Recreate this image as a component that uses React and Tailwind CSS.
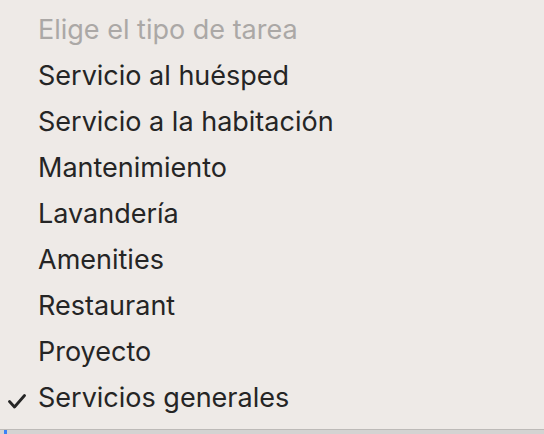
const options = [
  "Servicio al huésped",
  "Servicio a la habitación",
  "Mantenimiento",
  "Lavandería",
  "Amenities",
  "Restaurant",
  "Proyecto",
  "Servicios generales",
];

const selected = "Servicios generales";

const CheckIcon = () => (
  <svg width="20" height="15" viewBox="0 0 20 15" fill="none">
    <path
      d="M2.5 7.5 L7.5 13 L17.5 1.5"
      stroke="#262626"
      strokeWidth="2.8"
      strokeLinecap="round"
      strokeLinejoin="round"
    />
  </svg>
);

const App = () => {
  return (
    <div
      className="w-[544px] h-[434px] flex flex-col bg-[#d4d3d2] overflow-hidden"
      style={{ fontFamily: "Inter, 'Noto Sans', sans-serif" }}
    >
      {/* menu */}
      <div className="flex flex-col pt-[7px] pb-[8px] bg-[#eeeae7] border-b border-[#bdbab8]">
        <div className="h-[46px] flex items-center pl-[38px] text-[27px] text-[#aba8a6]">
          Elige el tipo de tarea
        </div>
        {options.map((option) => (
          <div
            key={option}
            className="relative h-[46px] flex items-center pl-[38px] text-[27px] text-[#252525]"
          >
            {option === selected && (
              <span className="absolute left-[7px] top-[19px] flex">
                <CheckIcon />
              </span>
            )}
            {option}
          </div>
        ))}
      </div>

      {/* select underneath */}
      <div className="flex-1 flex">
        <div className="ml-[4px] w-[3px] bg-[#3b82f6]" />
      </div>
    </div>
  );
};

export default App;
